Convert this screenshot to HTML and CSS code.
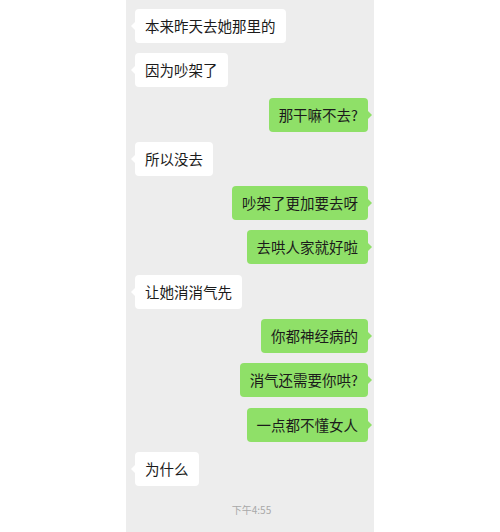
FILE: index.html
```html
<!DOCTYPE html>
<html>
	<head>
		<meta charset="UTF-8">
		<title>聊天记录</title>
		<link rel="stylesheet" href="styles.css">
	</head>
	<body>
		<div class="chat">
			<div class="row left"><span class="bubble">本来昨天去她那里的</span></div>
			<div class="row left"><span class="bubble">因为吵架了</span></div>
			<div class="row right"><span class="bubble">那干嘛不去?</span></div>
			<div class="row left"><span class="bubble">所以没去</span></div>
			<div class="row right"><span class="bubble">吵架了更加要去呀</span></div>
			<div class="row right"><span class="bubble">去哄人家就好啦</span></div>
			<div class="row left"><span class="bubble">让她消消气先</span></div>
			<div class="row right"><span class="bubble">你都神经病的</span></div>
			<div class="row right"><span class="bubble">消气还需要你哄?</span></div>
			<div class="row right"><span class="bubble">一点都不懂女人</span></div>
			<div class="row left"><span class="bubble">为什么</span></div>
			<div class="time">下午4:55</div>
		</div>
	</body>
</html>
```

FILE: styles.css
```css
* {
	padding: 0;
	margin: 0;
	box-sizing: border-box;
}
html,body {
	height: 100%;
	background: #ffffff;
}
.chat {
	width: 248px;
	height: 532px;
	margin-left: 126px;
	padding: 9px 6px 0 9px;
	background: #ededed;
	display: flex;
	flex-direction: column;
	gap: 10.3px;
	font-family: "Noto Sans CJK SC", "Noto Sans", sans-serif;
}
.row {
	display: flex;
}
.row.right {
	justify-content: flex-end;
}
.bubble {
	position: relative;
	display: inline-block;
	height: 34px;
	line-height: 34px;
	padding: 0 10px;
	border-radius: 4px;
	font-size: 14.5px;
	color: #1b1b1b;
	white-space: nowrap;
}
.left .bubble {
	background: #ffffff;
}
.right .bubble {
	background: #8fe068;
}
/*气泡的小三角*/
.bubble::before {
	content: "";
	position: absolute;
	top: 13px;
	width: 0;
	height: 0;
	border-top: 4px solid transparent;
	border-bottom: 4px solid transparent;
}
.left .bubble::before {
	left: -4px;
	border-right: 4px solid #ffffff;
}
.right .bubble::before {
	right: -4px;
	border-left: 4px solid #8fe068;
}
.time {
	margin-top: 6px;
	text-align: center;
	font-size: 10px;
	color: #a8a8a8;
}
```
